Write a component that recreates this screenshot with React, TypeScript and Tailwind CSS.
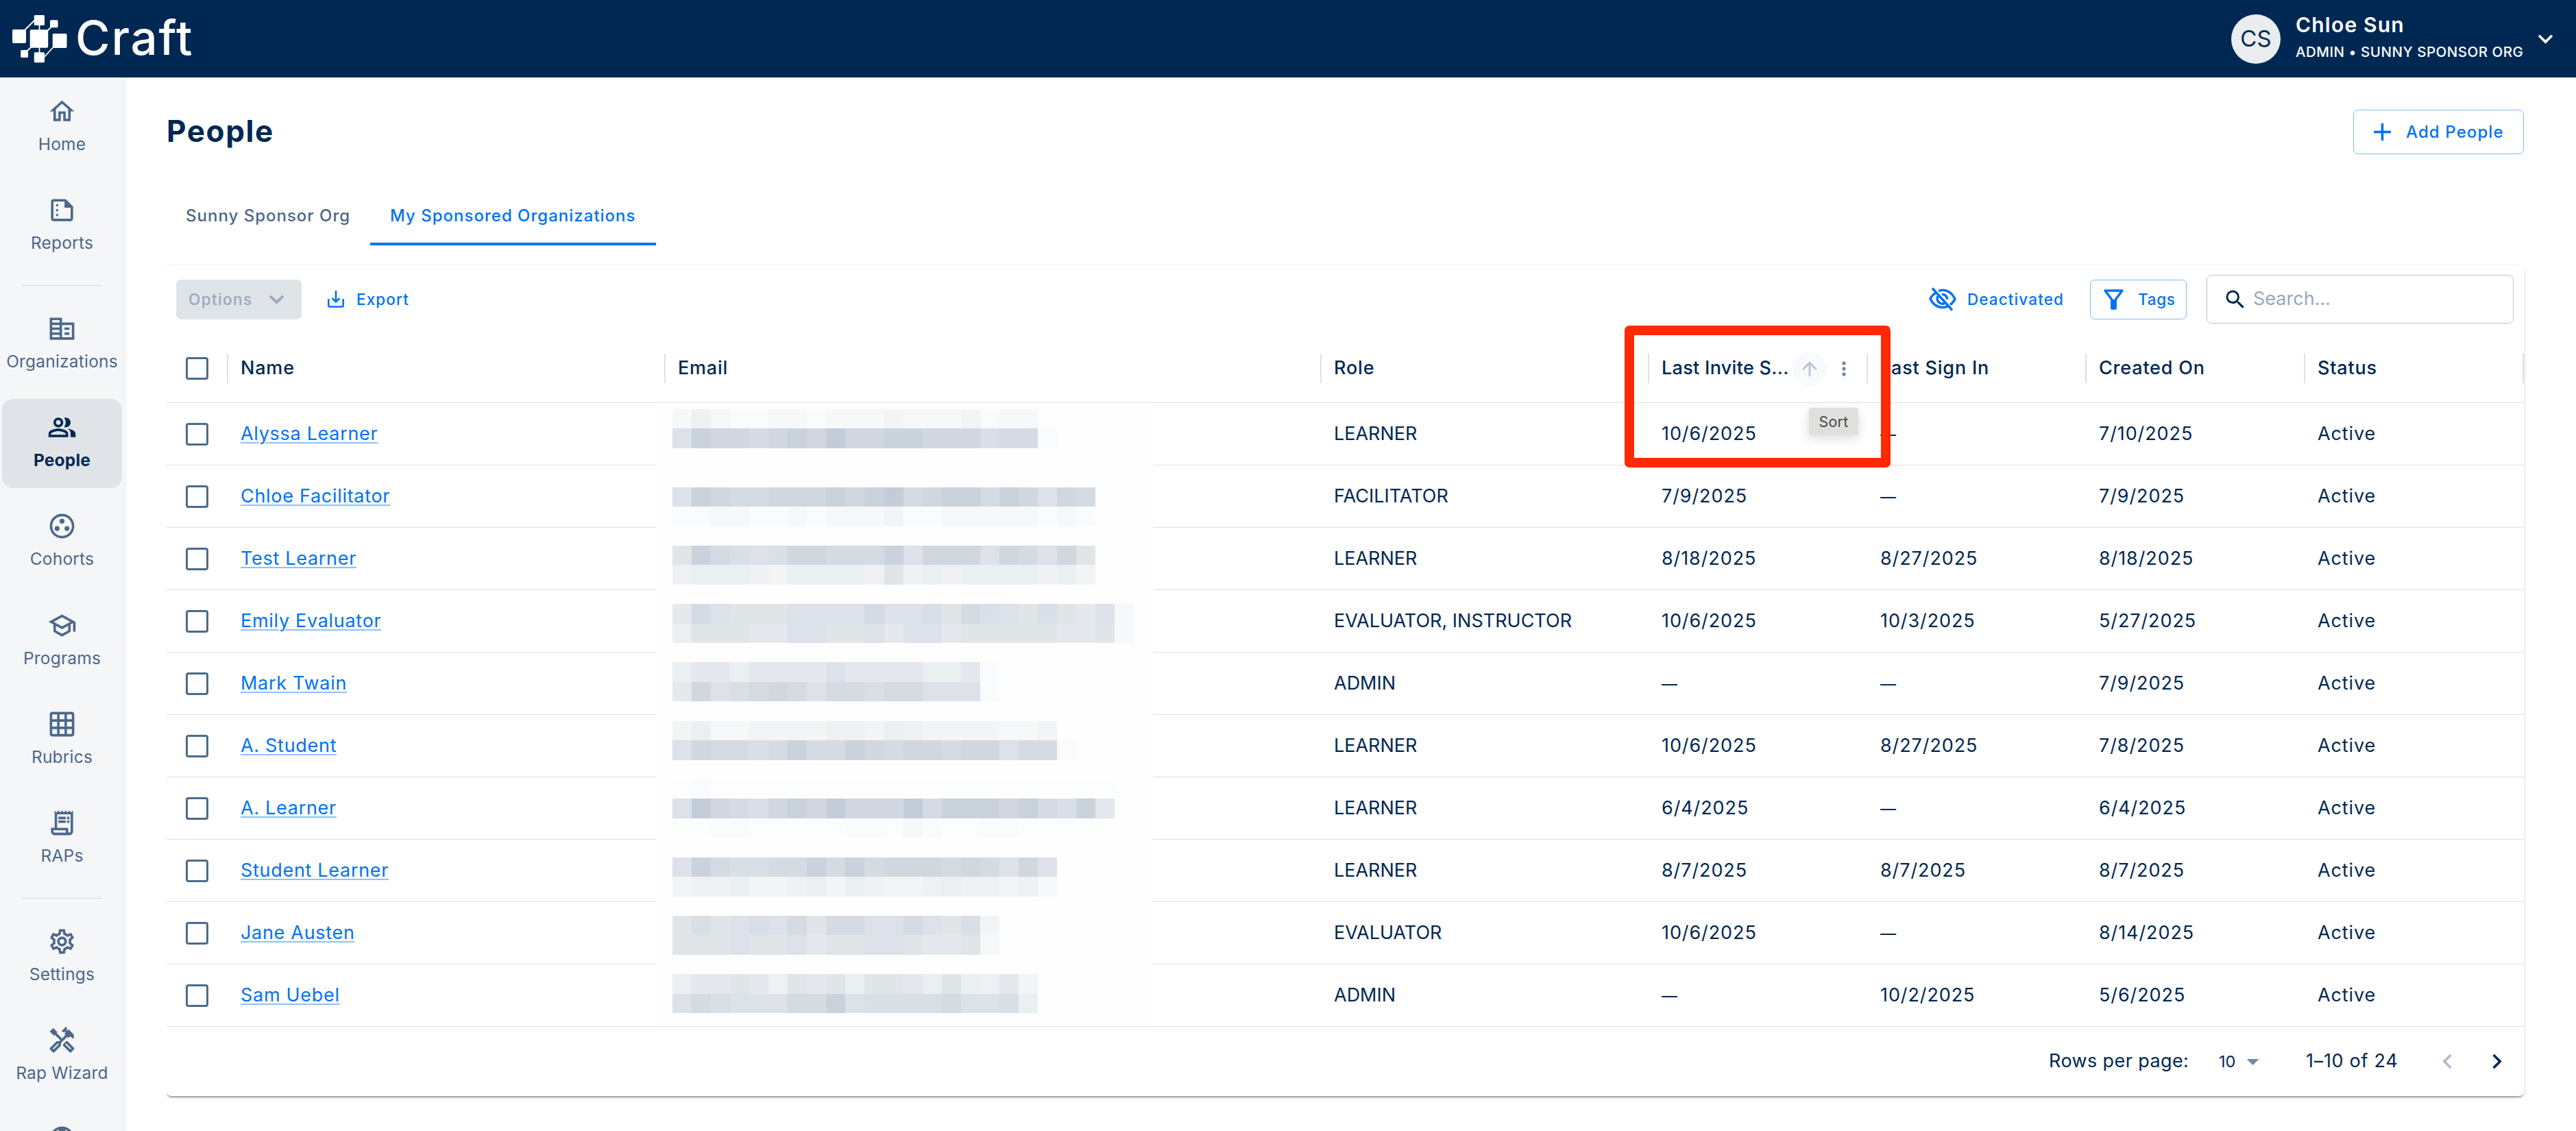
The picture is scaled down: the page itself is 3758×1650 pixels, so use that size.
import {
  MdGridOn,
  MdKeyboardArrowDown,
  MdOutlineCorporateFare,
  MdOutlineGroupWork,
  MdOutlineHandyman,
  MdOutlineHome,
  MdOutlinePeopleAlt,
  MdOutlineReceiptLong,
  MdOutlineSchool,
  MdOutlineSettings,
  MdOutlineSummarize,
  MdOutlineSupport,
  MdAdd,
  MdSearch,
  MdArrowUpward,
  MdMoreVert,
  MdArrowDropDown,
  MdKeyboardArrowLeft,
  MdKeyboardArrowRight,
} from "react-icons/md";

const navGroups = [
  [
    { label: "Home", icon: MdOutlineHome },
    { label: "Reports", icon: MdOutlineSummarize },
  ],
  [
    { label: "Organizations", icon: MdOutlineCorporateFare },
    { label: "People", icon: MdOutlinePeopleAlt, active: true },
    { label: "Cohorts", icon: MdOutlineGroupWork },
    { label: "Programs", icon: MdOutlineSchool },
    { label: "Rubrics", icon: MdGridOn },
    { label: "RAPs", icon: MdOutlineReceiptLong },
  ],
  [
    { label: "Settings", icon: MdOutlineSettings },
    { label: "Rap Wizard", icon: MdOutlineHandyman },
    { label: "", icon: MdOutlineSupport },
  ],
];

const people = [
  { name: "Alyssa Learner", role: "LEARNER", invited: "10/6/2025", signedIn: "—", created: "7/10/2025" },
  { name: "Chloe Facilitator", role: "FACILITATOR", invited: "7/9/2025", signedIn: "—", created: "7/9/2025" },
  { name: "Test Learner", role: "LEARNER", invited: "8/18/2025", signedIn: "8/27/2025", created: "8/18/2025" },
  { name: "Emily Evaluator", role: "EVALUATOR, INSTRUCTOR", invited: "10/6/2025", signedIn: "10/3/2025", created: "5/27/2025" },
  { name: "Mark Twain", role: "ADMIN", invited: "—", signedIn: "—", created: "7/9/2025" },
  { name: "A. Student", role: "LEARNER", invited: "10/6/2025", signedIn: "8/27/2025", created: "7/8/2025" },
  { name: "A. Learner", role: "LEARNER", invited: "6/4/2025", signedIn: "—", created: "6/4/2025" },
  { name: "Student Learner", role: "LEARNER", invited: "8/7/2025", signedIn: "8/7/2025", created: "8/7/2025" },
  { name: "Jane Austen", role: "EVALUATOR", invited: "10/6/2025", signedIn: "—", created: "8/14/2025" },
  { name: "Sam Uebel", role: "ADMIN", invited: "—", signedIn: "10/2/2025", created: "5/6/2025" },
];

// one string per mosaic row, one letter per cell; empty rows stay blank
const mosaic = [
  "ljlmmllmlllklllkmll",
  "fbccdcbcaccbbccceddm",
  "",
  "",
  "fbcddcccbcbadcbbdbcfcd",
  "mmllmmlmlllkmmlllllmlm",
  "",
  "gbdefeccdddbfcccfcdfcg",
  "jiiijkiiiijgjijiiiijik",
  "",
  "hdfgggffffdffegdefgeghfl",
  "iggghhffggfhffhggggghhgl",
  "",
  "ihhihhhhfhhhhiihm",
  "hcfedcdfddeddfffm",
  "",
  "killkkkkjjkijkkkkllk",
  "fcddedbddbcdccdccfddm",
  "",
  "nmnnnnnnnnnnnnnnnnnnnnn",
  "facdecbcacccadbbbcbdebh",
  "nnmmnnnnnmmnlmnnmmnnnn",
  "",
  "fbdeeddbdbdcccdcdfcf",
  "kjjikkjikijkkjijjkjl",
  "",
  "gegfefdgddffdfgek",
  "gggfggfhggffghhgl",
  "",
  "ihhghjghgigghigijhk",
  "fdefffddbfeeeedffei",
];

const shades: Record<string, string> = {
  a: "bg-[#c5ccd9]",
  b: "bg-[#cad2dc]",
  c: "bg-[#d0d7df]",
  d: "bg-[#d4dbe3]",
  e: "bg-[#d8dfe7]",
  f: "bg-[#dde1e9]",
  g: "bg-[#e0e5e8]",
  h: "bg-[#e5e8ed]",
  i: "bg-[#eaeff2]",
  j: "bg-[#eff0f4]",
  k: "bg-[#f3f4f6]",
  l: "bg-[#f7f8fa]",
  m: "bg-[#fafbfd]",
  n: "bg-[#fcfdfd]",
};

const columns =
  "grid grid-cols-[90px_638px_957px_478px_319px_319px_319px_319px] items-center";

function Logo() {
  return (
    <div className="flex items-center">
      <svg width="80" height="70" viewBox="0 0 80 70" fill="#fff">
        <path
          d="M14 26 36 4M39.500 12V24M62 12 48 26M39.500 46V56M20 54 30 44M44 64 64 42"
          stroke="#fff"
          strokeWidth="1.800"
          fill="none"
        />
        <rect x="0" y="21" width="20" height="20" rx="2" />
        <rect x="25.700" y="21.300" width="26.500" height="26.500" rx="2" />
        <rect x="31.800" y="0" width="15.200" height="15" rx="1.500" />
        <rect x="55" y="7.300" width="11.500" height="11" rx="1.500" />
        <rect x="58.700" y="27" width="20.800" height="21" rx="2" />
        <rect x="12.200" y="51" width="10.800" height="11" rx="1.500" />
        <rect x="31.800" y="54.300" width="15.200" height="15" rx="1.500" />
      </svg>
      <span className="ml-3 pb-0.5 text-[69px] font-medium leading-none tracking-[1.800px]">
        Craft
      </span>
    </div>
  );
}

function Header() {
  return (
    <header className="flex h-[113px] shrink-0 items-center justify-between bg-[#002852] pl-[18px] pr-[23px] text-white">
      <Logo />
      <div className="flex items-center">
        <div className="flex size-[72px] items-center justify-center rounded-full bg-[#e9edf0] text-[33px] text-[#002852]">
          CS
        </div>
        <div className="ml-[22px] w-[332px] whitespace-nowrap pb-0.5">
          <div className="text-[30px] font-semibold leading-[38px] tracking-[1.200px]">Chloe Sun</div>
          <div className="pt-[3px] text-[20.500px] font-medium leading-[36px] tracking-[0.500px]">
            ADMIN • SUNNY SPONSOR ORG
          </div>
        </div>
        <MdKeyboardArrowDown className="ml-[11px] size-[43px]" />
      </div>
    </header>
  );
}

function Sidebar() {
  return (
    <nav className="flex w-[185px] shrink-0 flex-col bg-[#f4f6f8] pt-2 text-[#4c688a]">
      {navGroups.map((group, i) => (
        <div key={i}>
          {i > 0 && (
            <div className="mb-[20.500px] ml-8 mt-[6.600px] h-[1.500px] w-[117px] bg-[#d5d9dd]" />
          )}
          {group.map(({ label, icon: Icon, active }: any) => (
            <div
              key={label}
              className={
                active
                  ? "mb-[14.200px] ml-[3px] flex h-[130px] w-[175px] flex-col items-center rounded-2xl bg-[#e0e3e8] pt-5 font-bold text-[#002852]"
                  : "mb-[14.200px] ml-[3px] flex h-[130px] w-[175px] flex-col items-center rounded-2xl pt-5"
              }
            >
              <Icon className="size-[43px]" />
              <span className="mt-2 text-[24.500px] leading-[36px] tracking-[0.200px]">{label}</span>
            </div>
          ))}
        </div>
      ))}
    </nav>
  );
}

function Checkbox() {
  return <div className="ml-[28px] size-[33px] rounded border-[3.600px] border-[#4c6a8c]" />;
}

function HeaderCell({ children }: any) {
  return (
    <div className="flex h-[43px] items-center whitespace-nowrap border-r-2 border-[#e0e0e0] pl-[18px] tracking-[0.800px]">
      {children}
    </div>
  );
}

function DateCell({ value }: { value: string }) {
  return (
    <div className="pl-[18px] tracking-[0.900px]">
      {value === "—" ? <span className="text-[23px]">—</span> : value}
    </div>
  );
}

function Toolbar() {
  return (
    <div className="flex h-[101px] items-center pb-0.5 pl-[14px] pr-[15px] text-[22.500px] font-medium tracking-[1.100px] text-[#0072f5]">
      <div className="flex h-[58px] w-[183px] items-center rounded-[7px] bg-[#dfe4e8] pl-[18px] text-[#98a8bc]">
        <span className="w-[107px] tracking-[1.400px]">Options</span>
        <MdKeyboardArrowDown className="size-[43px]" />
      </div>
      <svg className="ml-[38px]" width="24" height="25" viewBox="0 0 24 25" fill="none" stroke="currentColor" strokeWidth="2.600">
        <path d="M1.300 12v9.500a2 2 0 0 0 2 2h17.400a2 2 0 0 0 2-2V12M12 0v16M6.500 11l5.500 5.500 5.500-5.500" />
      </svg>
      <span className="ml-[18px]">Export</span>

      <svg className="ml-auto" width="40" height="36" viewBox="0 0 40 36" fill="none" stroke="currentColor" strokeWidth="3.500">
        <path d="M14 5.500C24 1.500 33 7 38 17c-1.500 3.500-4 6.500-7 8.500M10 8.500C6 10.500 3.500 13.500 2 17c5 11 17 15.500 26 10.500M13 13c-3 7 3 13 10 10.500M19 10.500c4-.5 8 3 7.500 7.500M5 1.500l29 32" />
      </svg>
      <span className="ml-4 w-[179px]">Deactivated</span>
      <div className="flex h-[58px] w-[141px] items-center rounded-[7px] border-[1.800px] border-[#7fb8fa] pl-[19px]">
        <svg width="29" height="30" viewBox="0 0 29 30" fill="none" stroke="currentColor" strokeWidth="3.400" strokeLinejoin="round">
          <path d="M2 2h25L17.200 15v13h-5.400V15z" />
          <path d="M14.500 15v13" />
        </svg>
        <span className="ml-[21px] tracking-[0.700px]">Tags</span>
      </div>
      <div className="ml-[29px] flex h-[71px] w-[448px] items-center rounded-[7px] border-[1.800px] border-[#c2c4c7] pl-[23px] text-[27px] font-normal tracking-normal text-[#98a8bc]">
        <MdSearch className="size-[36px] text-[#002852]" />
        <span className="ml-2">Search…</span>
      </div>
    </div>
  );
}

function PeopleTable() {
  return (
    <div className="relative text-[27px] text-[#002852]">
      <div className={`${columns} h-[100px] border-b-[1.500px] border-[#e0e0e0] font-medium`}>
        <div className="flex h-[43px] items-center border-r-2 border-[#e0e0e0]">
          <Checkbox />
        </div>
        <HeaderCell>Name</HeaderCell>
        <HeaderCell>Email</HeaderCell>
        <HeaderCell>Role</HeaderCell>
        <HeaderCell>
          <span className="w-[191px] tracking-[0.300px]">Last Invite S...</span>
          <span className="flex size-[50px] shrink-0 items-center justify-center rounded-full bg-[#f8fafc]">
            <MdArrowUpward className="size-8 text-[#b4c2d0]" />
          </span>
          <MdMoreVert className="ml-[9px] size-8 shrink-0 text-[#6f88a6]" />
        </HeaderCell>
        <HeaderCell>Last Sign In</HeaderCell>
        <HeaderCell>Created On</HeaderCell>
        <HeaderCell>Status</HeaderCell>
      </div>

      {people.map((p) => (
        <div key={p.name} className={`${columns} h-[91.050px] border-b-[1.500px] border-[#e0e0e0]`}>
          <Checkbox />
          <div className="pl-[18px] tracking-[0.700px]">
            <a className="text-[#0072f5] underline decoration-[#8fc1fb] decoration-2 underline-offset-[3px]">
              {p.name}
            </a>
          </div>
          <div />
          <div className="whitespace-nowrap pl-[18px]">{p.role}</div>
          <DateCell value={p.invited} />
          <DateCell value={p.signedIn} />
          <DateCell value={p.created} />
          <div className="pl-[18px] tracking-[0.900px]">Active</div>
        </div>
      ))}

      {/* pixelated cover over the email addresses */}
      <div className="absolute left-[714px] top-[101px] h-[908px] w-[725px] bg-[#fefefe] pl-6 pt-2">
        {mosaic.map((row, i) => (
          <div key={i} className="flex h-[28.430px]">
            {row.split("").map((cell, j) => (
              <div key={j} className={`h-full w-[28.050px] ${shades[cell]}`} />
            ))}
          </div>
        ))}
      </div>

      {/* sort tooltip */}
      <div className="absolute left-[2396px] top-[107px] flex h-10 w-[72px] items-center justify-center rounded-[3px] bg-[#dfdfdd] text-[21.500px] tracking-[0.200px] text-[#4a4a46] shadow-[0_4px_16px_rgba(0,0,0,0.15)]">
        Sort
      </div>

      {/* highlight box */}
      <div className="absolute left-[2127px] top-[-13px] h-[207px] w-[388px] rounded-[7px] bg-[#ff2a00] [clip-path:polygon(evenodd,0_0,100%_0,100%_100%,0_100%,0_0,14px_14px,374px_14px,374px_193px,14px_193px,14px_14px)]" />
    </div>
  );
}

function Pagination() {
  return (
    <div className="flex h-[100px] items-center justify-end pr-[18px] text-[27px] text-[#002852]">
      <span className="w-[248px] tracking-[0.400px]">Rows per page:</span>
      <span className="w-[28px] text-[23.500px]">10</span>
      <MdArrowDropDown className="size-[43px] text-[#6f88a6]" />
      <span className="ml-[56px] w-[185px] tracking-[0.700px]">1–10 of 24</span>
      <MdKeyboardArrowLeft className="size-[43px] text-[#b0bccb]" />
      <MdKeyboardArrowRight className="ml-[29px] size-[43px]" />
    </div>
  );
}

export default function App() {
  return (
    <div className="flex h-[1650px] w-[3758px] flex-col overflow-hidden bg-white font-['Inter',sans-serif]">
      <Header />
      <div className="flex min-h-0 flex-1">
        <Sidebar />
        <main className="flex-1 pl-[58px] pr-[76px] pt-[47px] text-[#002852]">
          <div className="flex h-[65px] items-center justify-between">
            <h1 className="pb-1 text-[44px] font-bold tracking-[1.600px]">People</h1>
            <button className="flex h-[65px] w-[249px] items-center rounded-[7px] border-[1.800px] border-[#7fb8fa] pl-[20px] text-[24px] font-medium tracking-[1.100px] text-[#0072f5]">
              <MdAdd className="size-[43px]" />
              <span className="ml-[13px]">Add People</span>
            </button>
          </div>

          <div className="mt-[47px] flex h-[86px] text-[24px] font-medium tracking-[1px]">
            <div className="flex h-full w-[297px] items-center pl-[28px] text-[#4c688a]">
              Sunny Sponsor Org
            </div>
            <div className="flex h-full w-[417px] items-center border-b-4 border-[#0072f5] pl-[29px] pt-1 text-[#0072f5]">
              My Sponsored Organizations
            </div>
          </div>

          <section className="mt-[29px] h-[1212px] rounded-[7px] bg-white shadow-[0_4px_2px_-2px_rgba(0,0,0,0.2),0_2px_2px_rgba(0,0,0,0.14),0_2px_6px_rgba(0,0,0,0.12)] [clip-path:inset(-12px_-12px_-12px_0)]">
            <Toolbar />
            <PeopleTable />
            <Pagination />
          </section>
        </main>
      </div>
    </div>
  );
}
